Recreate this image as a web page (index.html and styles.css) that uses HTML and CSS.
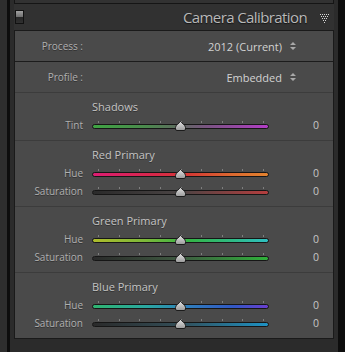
FILE: index.html
```html
<!DOCTYPE html>
<html lang="en">
<head>
    <meta charset="UTF-8">
    <title>Camera Calibration</title>
    <link rel="stylesheet" href="styles.css">
</head>
<body>
    <div class="frame">
        <div class="prev"></div>
        <div class="header">
            <span class="toggle"></span>
            <span class="title">Camera Calibration</span>
            <svg class="collapse" width="9" height="9" viewBox="0 0 9 9">
                <g fill="#d6d6d6">
                    <rect x="0" y="0" width="1" height="1"/><rect x="2" y="0" width="1" height="1"/><rect x="4" y="0" width="1" height="1"/><rect x="6" y="0" width="1" height="1"/><rect x="8" y="0" width="1" height="1"/>
                    <rect x="1" y="2" width="1" height="1"/><rect x="3" y="2" width="1" height="1"/><rect x="5" y="2" width="1" height="1"/><rect x="7" y="2" width="1" height="1"/>
                    <rect x="2" y="4" width="1" height="1"/><rect x="4" y="4" width="1" height="1"/><rect x="6" y="4" width="1" height="1"/>
                    <rect x="3" y="6" width="1" height="1"/><rect x="5" y="6" width="1" height="1"/>
                    <rect x="4" y="8" width="1" height="1"/>
                </g>
            </svg>
        </div>
        <div class="panel">
            <div class="row process">
                <span class="label">Process :</span>
                <span class="value">2012 (Current)</span>
                <svg class="updown" width="6" height="8" viewBox="0 0 6 8"><path d="M3 0 L6 3 L0 3 Z M0 5 L6 5 L3 8 Z" fill="#a8a8a8"/></svg>
            </div>
            <div class="row profile">
                <span class="label">Profile :</span>
                <span class="value">Embedded</span>
                <svg class="updown" width="6" height="8" viewBox="0 0 6 8"><path d="M3 0 L6 3 L0 3 Z M0 5 L6 5 L3 8 Z" fill="#a8a8a8"/></svg>
            </div>

            <div class="section">
                <div class="heading">Shadows</div>
                <div class="slider-row">
                    <span class="label">Tint</span>
                    <div class="slider">
                        <div class="ticks"><i></i><i></i><i></i><i></i><i></i><i></i><i></i><i></i><i></i></div>
                        <div class="track tint"></div>
                        <svg class="thumb" width="11" height="10" viewBox="0 0 11 10"><use href="#thumb"/></svg>
                    </div>
                    <span class="num">0</span>
                </div>
            </div>

            <div class="section">
                <div class="heading">Red Primary</div>
                <div class="slider-row">
                    <span class="label">Hue</span>
                    <div class="slider">
                        <div class="ticks"><i></i><i></i><i></i><i></i><i></i><i></i><i></i><i></i><i></i></div>
                        <div class="track red-hue"></div>
                        <svg class="thumb" width="11" height="10" viewBox="0 0 11 10"><use href="#thumb"/></svg>
                    </div>
                    <span class="num">0</span>
                </div>
                <div class="slider-row">
                    <span class="label">Saturation</span>
                    <div class="slider">
                        <div class="ticks"><i></i><i></i><i></i><i></i><i></i><i></i><i></i><i></i><i></i></div>
                        <div class="track red-sat"></div>
                        <svg class="thumb" width="11" height="10" viewBox="0 0 11 10"><use href="#thumb"/></svg>
                    </div>
                    <span class="num">0</span>
                </div>
            </div>

            <div class="section">
                <div class="heading">Green Primary</div>
                <div class="slider-row">
                    <span class="label">Hue</span>
                    <div class="slider">
                        <div class="ticks"><i></i><i></i><i></i><i></i><i></i><i></i><i></i><i></i><i></i></div>
                        <div class="track green-hue"></div>
                        <svg class="thumb" width="11" height="10" viewBox="0 0 11 10"><use href="#thumb"/></svg>
                    </div>
                    <span class="num">0</span>
                </div>
                <div class="slider-row">
                    <span class="label">Saturation</span>
                    <div class="slider">
                        <div class="ticks"><i></i><i></i><i></i><i></i><i></i><i></i><i></i><i></i><i></i></div>
                        <div class="track green-sat"></div>
                        <svg class="thumb" width="11" height="10" viewBox="0 0 11 10"><use href="#thumb"/></svg>
                    </div>
                    <span class="num">0</span>
                </div>
            </div>

            <div class="section">
                <div class="heading">Blue Primary</div>
                <div class="slider-row">
                    <span class="label">Hue</span>
                    <div class="slider">
                        <div class="ticks"><i></i><i></i><i></i><i></i><i></i><i></i><i></i><i></i><i></i></div>
                        <div class="track blue-hue"></div>
                        <svg class="thumb" width="11" height="10" viewBox="0 0 11 10"><use href="#thumb"/></svg>
                    </div>
                    <span class="num">0</span>
                </div>
                <div class="slider-row">
                    <span class="label">Saturation</span>
                    <div class="slider">
                        <div class="ticks"><i></i><i></i><i></i><i></i><i></i><i></i><i></i><i></i><i></i></div>
                        <div class="track blue-sat"></div>
                        <svg class="thumb" width="11" height="10" viewBox="0 0 11 10"><use href="#thumb"/></svg>
                    </div>
                    <span class="num">0</span>
                </div>
            </div>
        </div>
    </div>

    <svg width="0" height="0" style="position:absolute">
        <defs>
            <linearGradient id="thumb-fill" x1="0" y1="0" x2="0" y2="1">
                <stop offset="0" stop-color="#e2e2e2"/>
                <stop offset="1" stop-color="#9a9a9a"/>
            </linearGradient>
            <path id="thumb" d="M5.5 0.5 C6.5 2 10.5 4 10.5 6.5 L10.5 8 Q10.5 9.5 9 9.5 L2 9.5 Q0.5 9.5 0.5 8 L0.5 6.5 C0.5 4 4.5 2 5.5 0.5 Z" fill="url(#thumb-fill)" stroke="#1c1c1c" stroke-width="1"/>
        </defs>
    </svg>
</body>
</html>
```

FILE: styles.css
```css
body {
    margin: 0;
    background-color: #2e2e2e;
    font-family: "Open Sans", "Liberation Sans", sans-serif;
    color: #b4b4b4;
}
.frame {
    margin-left: 7px;
    height: 352px;
    border-left: 3px solid #0d0d0d;
    border-right: 7px solid #0d0d0d;
    padding: 0 4px;
    background-color: #2b2b2b;
}
.prev {
    height: 3px;
    border: 1px solid #151515;
    border-top: none;
    background-color: #323232;
}
.header {
    display: flex;
    align-items: center;
    height: 26px;
    padding: 0 5px 0 1px;
    background-color: #313131;
}
.toggle {
    width: 7px;
    height: 12px;
    border: 1px solid #111;
    background: linear-gradient(to bottom, #a0a0a0 0, #6e6e6e 50%, #262626 50%, #303030 100%);
}
.title {
    margin-left: auto;
    margin-right: 13px;
    font-size: 15px;
    letter-spacing: -0.6px;
    color: #b8b8b8;
    text-shadow: 0 1px 1px rgba(0,0,0,0.6);
}
.collapse {
    margin-top: 2px;
}
.panel {
    border: 1px solid #1a1a1a;
    background-color: #4a4a4a;
}
.row {
    display: flex;
    align-items: center;
    height: 30px;
    padding-right: 37px;
}
.row.process {
    border-bottom: 1px solid #1c1c1c;
}
.row .label {
    width: 68px;
    text-align: right;
    font-size: 10px;
}
.row .value {
    margin-left: auto;
    margin-right: 8px;
    font-size: 11px;
    color: #d2d2d2;
}
.label {
    color: #b0b0b0;
    text-shadow: 0 1px 0 rgba(0,0,0,0.35);
}
.section {
    border-top: 1px solid #3c3c3c;
    padding: 5px 14px 6px 0;
}
.heading {
    height: 18px;
    line-height: 18px;
    margin-left: 77px;
    font-size: 11px;
    color: #c4c4c4;
    text-shadow: 0 1px 0 rgba(0,0,0,0.35);
}
.slider-row {
    display: grid;
    grid-template-columns: 68px 177px 1fr;
    column-gap: 9px;
    height: 18px;
    align-items: center;
}
.slider-row .label {
    text-align: right;
    font-size: 10px;
    line-height: 18px;
}
.num {
    text-align: right;
    font-size: 10.5px;
    color: #c6c6c6;
}
.slider {
    position: relative;
    height: 18px;
    padding-top: 5px;
    box-sizing: border-box;
}
.ticks {
    display: flex;
    justify-content: space-between;
    padding: 0 5px 0 6px;
    height: 2px;
    margin-bottom: 1px;
}
.ticks i {
    width: 1px;
    height: 2px;
    background-color: #7e7e7e;
}
.track {
    height: 3px;
    border: 1px solid #161616;
    border-radius: 3px;
}
.thumb {
    position: absolute;
    left: 83px;
    top: 5px;
}
.tint {
    background: linear-gradient(to right, #3fa443 0%, #4b8a4d 30%, #5f6a60 50%, #7a5482 65%, #b23dc6 100%);
}
.red-hue {
    background: linear-gradient(to right, #dc1d72 0%, #d8284a 35%, #d43a34 55%, #dc6a30 80%, #e2822e 100%);
}
.red-sat {
    background: linear-gradient(to right, #2a2a2a 0%, #4a4444 50%, #b43e3e 100%);
}
.green-hue {
    background: linear-gradient(to right, #aebc2c 0%, #7cb83a 30%, #34b446 55%, #2fba86 80%, #30c0c2 100%);
}
.green-sat {
    background: linear-gradient(to right, #2a2a2a 0%, #3f5a41 50%, #2fb03a 100%);
}
.blue-hue {
    background: linear-gradient(to right, #2fb470 0%, #2aa8a0 30%, #2f7cbc 55%, #3158c4 80%, #6a3ed0 100%);
}
.blue-sat {
    background: linear-gradient(to right, #2a2a2a 0%, #334e58 50%, #1e92c4 100%);
}
```
